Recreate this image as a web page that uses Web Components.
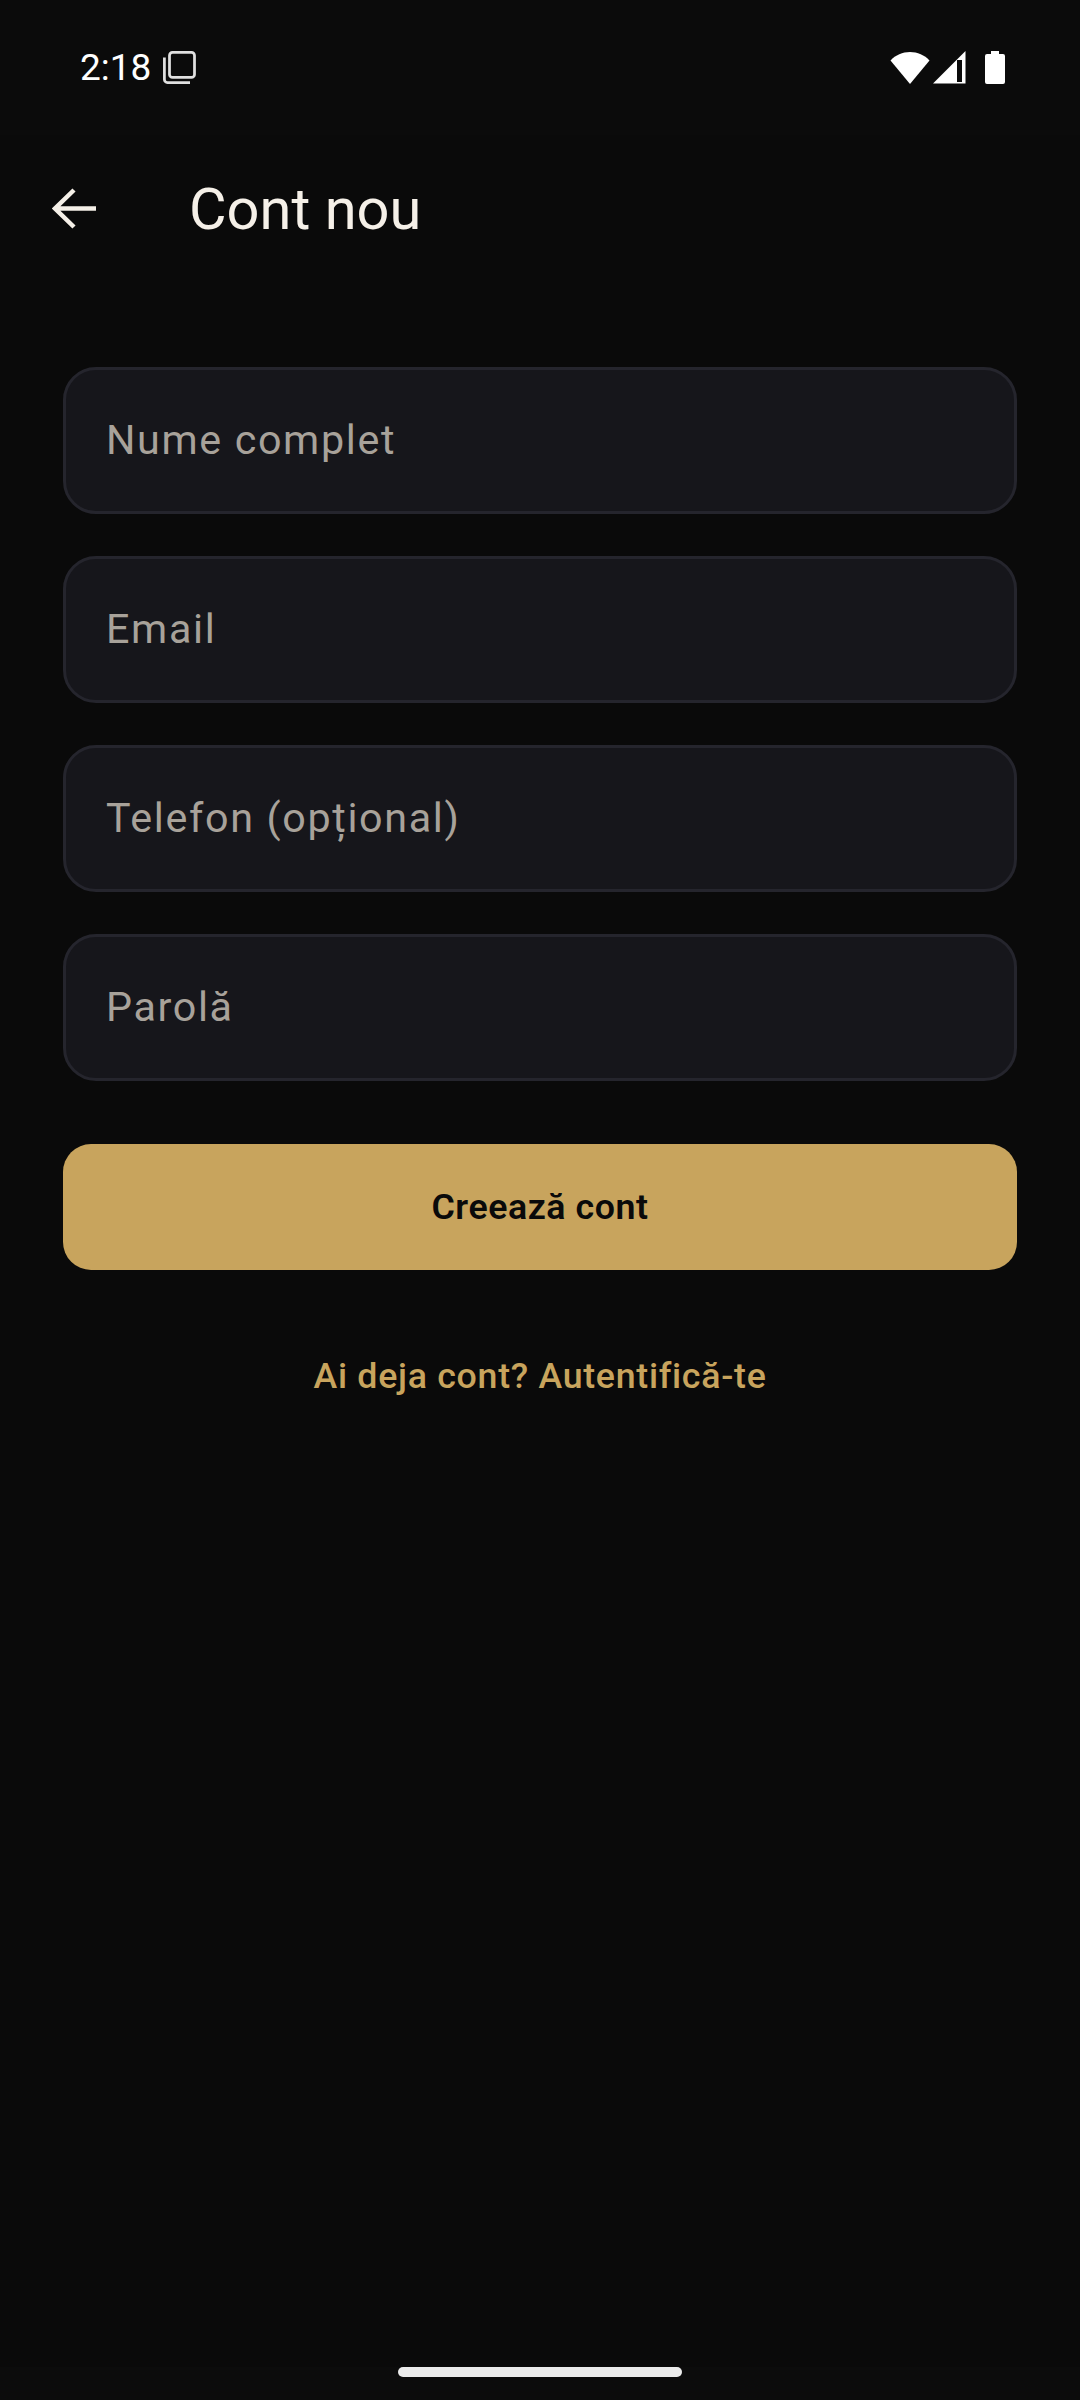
<!DOCTYPE html>
<html lang="ro"><head><meta charset="utf-8"><style>
html,body{margin:0;background:#0a0a0a}
body{font-family:Roboto,sans-serif;width:1080px;height:2400px;overflow:hidden}
</style></head><body>
<app-screen>
<status-bar slot="top"></status-bar>
<app-header slot="top">Cont nou</app-header>
<text-field>Nume complet</text-field>
<text-field>Email</text-field>
<text-field>Telefon (opțional)</text-field>
<text-field>Parolă</text-field>
<primary-button>Creează cont</primary-button>
<link-button>Ai deja cont? Autentifică-te</link-button>
<gesture-bar slot="bottom"></gesture-bar>
</app-screen>
<script>
function def(name,html){customElements.define(name,class extends HTMLElement{constructor(){super();this.attachShadow({mode:'open'}).innerHTML=html}})}
def('app-screen',`<style>:host{display:flex;flex-direction:column;height:2400px;background:#0a0a0a}
main{flex:1;display:flex;flex-direction:column;padding:84px 63px 0}
</style><slot name="top"></slot><main><slot></slot></main><slot name="bottom"></slot>`);
def('status-bar',`<style>:host{display:flex;align-items:center;height:135px;box-sizing:border-box;padding:0 75px 0 80px;color:#fff;background:#0b0b0b;font-size:37px}
span{line-height:135px}
.l{margin-left:12px;display:block}.sp{flex:1}svg{display:block}
</style><span>2:18</span>
<svg class="l" width="33" height="33" viewBox="0 0 33 33" fill="none" stroke="#e0e0e0" stroke-width="2.750"><rect x="6.500" y="1.400" width="25" height="25" rx="3"/><path d="M1.400 6.500V28.500a3 3 0 0 0 3 3H27"/></svg>
<div class="sp"></div>
<svg width="40" height="33" viewBox="0 0 40 33" style="margin-right:3px"><path fill="#fff" d="M0.500 9.500C5.500 4 12.500 1 20 1s14.500 3 19.500 8.500L20 33z"/></svg>
<svg width="33" height="33" viewBox="0 0 33 33" style="margin-right:19px"><path fill="#fff" fill-rule="evenodd" d="M0 32.500 32.500 0v32.500zM24 9v22h5V9z"/></svg>
<svg width="20" height="33" viewBox="0 0 20 33"><path fill="#fff" d="M6 0h8v3h4a2 2 0 0 1 2 2v26a2 2 0 0 1-2 2H2a2 2 0 0 1-2-2V5a2 2 0 0 1 2-2h4z"/></svg>`);
def('app-header',`<style>:host{display:flex;align-items:center;height:148px;color:#f5f0e8;background:#0a0a0a}
svg{display:block;margin-left:52px}
h1{margin:0 0 0 93px;font:400 57.750px Roboto,sans-serif}
</style><svg width="44" height="44" viewBox="0 0 44 44" fill="none" stroke="#f5f0e8" stroke-width="4.500"><path d="M44 21.500H3M22 3 3 21.500 22 40"/></svg><h1><slot></slot></h1>`);
def('text-field',`<style>:host{display:flex;align-items:center;box-sizing:border-box;height:147px;margin-bottom:42px;padding:0 40px 2px;background:#16161b;border:3px solid #25252d;border-radius:33px;color:#a8a29a;font-size:41.250px;letter-spacing:1.650px}
</style><slot></slot>`);
def('primary-button',`<style>:host{display:flex;align-items:center;justify-content:center;height:126px;margin-top:21px;background:#c8a45d;border-radius:28px;color:#0a0a0a;font-size:35.750px;font-weight:600;letter-spacing:.55px}
</style><slot></slot>`);
def('link-button',`<style>:host{display:block;text-align:center;margin-top:85px;color:#c8a45d;font-size:35.750px;font-weight:500;letter-spacing:.7px;line-height:42px}
</style><slot></slot>`);
def('gesture-bar',`<style>:host{display:flex;justify-content:center;height:33px;background:#0c0c0c}
i{display:block;width:284px;height:10px;border-radius:5px;background:#ebebeb}
</style><i></i>`);
</script></body></html>
